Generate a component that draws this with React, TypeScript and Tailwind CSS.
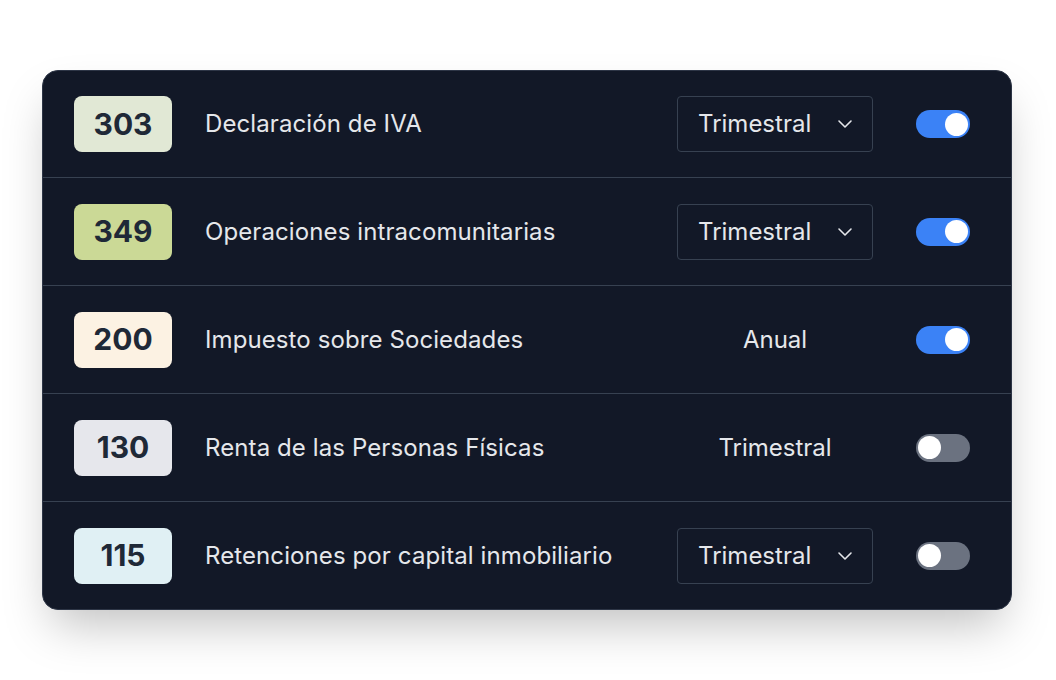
import * as React from "react"

interface Modelo {
  code: string
  name: string
  badge: string
  period: string
  selectable: boolean
  enabled: boolean
}

const modelos: Modelo[] = [
  { code: "303", name: "Declaración de IVA", badge: "bg-[#e1e8d5]", period: "Trimestral", selectable: true, enabled: true },
  { code: "349", name: "Operaciones intracomunitarias", badge: "bg-[#cbd996]", period: "Trimestral", selectable: true, enabled: true },
  { code: "200", name: "Impuesto sobre Sociedades", badge: "bg-[#fcf2e3]", period: "Anual", selectable: false, enabled: true },
  { code: "130", name: "Renta de las Personas Físicas", badge: "bg-[#e6e7ec]", period: "Trimestral", selectable: false, enabled: false },
  { code: "115", name: "Retenciones por capital inmobiliario", badge: "bg-[#e0f0f4]", period: "Trimestral", selectable: true, enabled: false },
]

function Toggle({ on, onChange }: { on: boolean; onChange: () => void }) {
  return (
    <button
      type="button"
      onClick={onChange}
      className={`flex h-[28px] w-[54px] shrink-0 items-center rounded-full px-[2px] transition-colors ${
        on ? "justify-end bg-[#3b82f6]" : "justify-start bg-[#6b7280]"
      }`}
    >
      <span className="h-[23px] w-[23px] rounded-full bg-white" />
    </button>
  )
}

export default function App() {
  const [items, setItems] = React.useState(modelos)

  const toggle = (code: string) =>
    setItems((prev) => prev.map((m) => (m.code === code ? { ...m, enabled: !m.enabled } : m)))

  return (
    <div
      className="min-h-[680px] bg-white pt-[70px] pl-[42px]"
      style={{ fontFamily: "Inter, 'Noto Sans', sans-serif" }}
    >
      <div className="w-[970px] overflow-hidden rounded-2xl border border-[#2d3546] bg-[#121827] shadow-[0_24px_48px_-10px_rgba(0,0,0,0.25)]">
        {items.map((m, i) => (
          <div
            key={m.code}
            className={`flex items-center pl-[31px] pr-[41px] ${i > 0 ? "h-[108px] border-t border-[#374151]" : "h-[106px]"}`}
          >
            <div
              className={`flex h-[56px] w-[98px] shrink-0 items-center justify-center rounded-lg ${m.badge} text-[30px] font-bold text-[#1f2937]`}
            >
              {m.code}
            </div>
            <div className="ml-[33px] flex-1 text-[24px] tracking-[0.1px] text-[#e5e7eb]">{m.name}</div>
            <div className="flex w-[196px] justify-center">
              {m.selectable ? (
                <div className="flex h-[56px] w-[196px] items-center justify-between rounded border border-[#374151] pl-[20px] pr-[19px] text-[24px] text-[#e5e7eb]">
                  <span>{m.period}</span>
                  <svg width="16" height="10" viewBox="0 0 16 10" fill="none" stroke="#e5e7eb" strokeWidth="1.6" strokeLinecap="round" strokeLinejoin="round">
                    <path d="M2 2l6 6 6-6" />
                  </svg>
                </div>
              ) : (
                <span className="text-[24px] text-[#e5e7eb]">{m.period}</span>
              )}
            </div>
            <div className="ml-[43px]">
              <Toggle on={m.enabled} onChange={() => toggle(m.code)} />
            </div>
          </div>
        ))}
      </div>
    </div>
  )
}
